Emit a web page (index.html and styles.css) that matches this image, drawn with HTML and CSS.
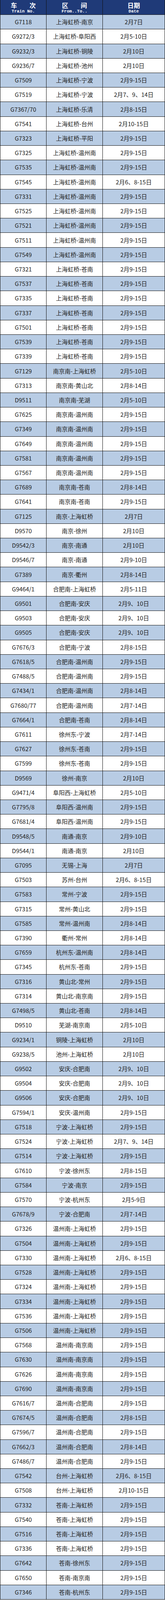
FILE: index.html
```html
<!DOCTYPE html>
<html lang="zh-CN">
<head>
<meta charset="utf-8">
<meta name="viewport" content="width=device-width, initial-scale=1">
<title>列车开行表</title>
<link rel="stylesheet" href="styles.css">
</head>
<body>
<div class="sheet">
  <div class="row head">
    <div class="c"><span class="zh">车　　次</span><span class="en">Train No.</span></div>
    <div class="c"><span class="zh">区　　间</span><span class="en">From..To..</span></div>
    <div class="c"><span class="zh">日期</span><span class="en">Date</span></div>
  </div>
  <div class="row b"><div class="c">G7118</div><div class="c">上海虹桥-南京</div><div class="c">2月7日</div></div>
  <div class="row"><div class="c">G9272/3</div><div class="c">上海虹桥-阜阳西</div><div class="c">2月5-10日</div></div>
  <div class="row b"><div class="c">G9232/3</div><div class="c">上海虹桥-铜陵</div><div class="c">2月10日</div></div>
  <div class="row"><div class="c">G9236/7</div><div class="c">上海虹桥-池州</div><div class="c">2月10日</div></div>
  <div class="row b"><div class="c">G7509</div><div class="c">上海虹桥-宁波</div><div class="c">2月9-15日</div></div>
  <div class="row"><div class="c">G7519</div><div class="c">上海虹桥-宁波</div><div class="c">2月7、9、14日</div></div>
  <div class="row b"><div class="c">G7367/70</div><div class="c">上海虹桥-乐清</div><div class="c">2月8-15日</div></div>
  <div class="row"><div class="c">G7541</div><div class="c">上海虹桥-台州</div><div class="c">2月10-15日</div></div>
  <div class="row b"><div class="c">G7323</div><div class="c">上海虹桥-平阳</div><div class="c">2月9-15日</div></div>
  <div class="row"><div class="c">G7325</div><div class="c">上海虹桥-温州南</div><div class="c">2月9-15日</div></div>
  <div class="row b"><div class="c">G7535</div><div class="c">上海虹桥-温州南</div><div class="c">2月9-15日</div></div>
  <div class="row"><div class="c">G7545</div><div class="c">上海虹桥-温州南</div><div class="c">2月6、8-15日</div></div>
  <div class="row b"><div class="c">G7331</div><div class="c">上海虹桥-温州南</div><div class="c">2月9-15日</div></div>
  <div class="row"><div class="c">G7525</div><div class="c">上海虹桥-温州南</div><div class="c">2月9-15日</div></div>
  <div class="row b"><div class="c">G7521</div><div class="c">上海虹桥-温州南</div><div class="c">2月9-15日</div></div>
  <div class="row"><div class="c">G7511</div><div class="c">上海虹桥-温州南</div><div class="c">2月9-15日</div></div>
  <div class="row b"><div class="c">G7549</div><div class="c">上海虹桥-温州南</div><div class="c">2月9-15日</div></div>
  <div class="row"><div class="c">G7321</div><div class="c">上海虹桥-苍南</div><div class="c">2月9-15日</div></div>
  <div class="row b"><div class="c">G7537</div><div class="c">上海虹桥-苍南</div><div class="c">2月9-15日</div></div>
  <div class="row"><div class="c">G7335</div><div class="c">上海虹桥-苍南</div><div class="c">2月9-15日</div></div>
  <div class="row b"><div class="c">G7337</div><div class="c">上海虹桥-苍南</div><div class="c">2月9-15日</div></div>
  <div class="row"><div class="c">G7501</div><div class="c">上海虹桥-苍南</div><div class="c">2月9-15日</div></div>
  <div class="row b"><div class="c">G7539</div><div class="c">上海虹桥-苍南</div><div class="c">2月9-15日</div></div>
  <div class="row"><div class="c">G7339</div><div class="c">上海虹桥-苍南</div><div class="c">2月9-15日</div></div>
  <div class="row b"><div class="c">G7129</div><div class="c">南京南-上海虹桥</div><div class="c">2月5-10日</div></div>
  <div class="row"><div class="c">G7313</div><div class="c">南京南-黄山北</div><div class="c">2月8-14日</div></div>
  <div class="row b"><div class="c">D9511</div><div class="c">南京南-芜湖</div><div class="c">2月5-10日</div></div>
  <div class="row"><div class="c">G7625</div><div class="c">南京南-温州南</div><div class="c">2月9-15日</div></div>
  <div class="row b"><div class="c">G7349</div><div class="c">南京南-温州南</div><div class="c">2月9-15日</div></div>
  <div class="row"><div class="c">G7649</div><div class="c">南京南-温州南</div><div class="c">2月9-15日</div></div>
  <div class="row b"><div class="c">G7581</div><div class="c">南京南-温州南</div><div class="c">2月9-15日</div></div>
  <div class="row"><div class="c">G7567</div><div class="c">南京南-温州南</div><div class="c">2月9-15日</div></div>
  <div class="row b"><div class="c">G7689</div><div class="c">南京南-苍南</div><div class="c">2月8-14日</div></div>
  <div class="row"><div class="c">G7641</div><div class="c">南京南-苍南</div><div class="c">2月9-15日</div></div>
  <div class="row b"><div class="c">G7125</div><div class="c">南京-上海虹桥</div><div class="c">2月7日</div></div>
  <div class="row"><div class="c">D9570</div><div class="c">南京-徐州</div><div class="c">2月10日</div></div>
  <div class="row b"><div class="c">D9542/3</div><div class="c">南京-南通</div><div class="c">2月10日</div></div>
  <div class="row"><div class="c">D9546/7</div><div class="c">南京-南通</div><div class="c">2月9-10日</div></div>
  <div class="row b"><div class="c">G7389</div><div class="c">南京-衢州</div><div class="c">2月8-14日</div></div>
  <div class="row"><div class="c">G9464/1</div><div class="c">合肥南-上海虹桥</div><div class="c">2月5-11日</div></div>
  <div class="row b"><div class="c">G9501</div><div class="c">合肥南-安庆</div><div class="c">2月9、10日</div></div>
  <div class="row"><div class="c">G9503</div><div class="c">合肥南-安庆</div><div class="c">2月9、10日</div></div>
  <div class="row b"><div class="c">G9505</div><div class="c">合肥南-安庆</div><div class="c">2月9、10日</div></div>
  <div class="row"><div class="c">G7676/3</div><div class="c">合肥南-宁波</div><div class="c">2月8-15日</div></div>
  <div class="row b"><div class="c">G7618/5</div><div class="c">合肥南-温州南</div><div class="c">2月9-15日</div></div>
  <div class="row"><div class="c">G7488/5</div><div class="c">合肥南-温州南</div><div class="c">2月9-15日</div></div>
  <div class="row b"><div class="c">G7434/1</div><div class="c">合肥南-温州南</div><div class="c">2月8-14日</div></div>
  <div class="row"><div class="c">G7680/77</div><div class="c">合肥南-温州南</div><div class="c">2月7-14日</div></div>
  <div class="row b"><div class="c">G7664/1</div><div class="c">合肥南-苍南</div><div class="c">2月8-14日</div></div>
  <div class="row"><div class="c">G7611</div><div class="c">徐州东-宁波</div><div class="c">2月7-14日</div></div>
  <div class="row b"><div class="c">G7627</div><div class="c">徐州东-苍南</div><div class="c">2月9-15日</div></div>
  <div class="row"><div class="c">G7599</div><div class="c">徐州东-苍南</div><div class="c">2月9-15日</div></div>
  <div class="row b"><div class="c">D9569</div><div class="c">徐州-南京</div><div class="c">2月10日</div></div>
  <div class="row"><div class="c">G9471/4</div><div class="c">阜阳西-上海虹桥</div><div class="c">2月5-10日</div></div>
  <div class="row b"><div class="c">G7795/8</div><div class="c">阜阳西-温州南</div><div class="c">2月9-15日</div></div>
  <div class="row"><div class="c">G7681/4</div><div class="c">阜阳西-温州南</div><div class="c">2月9-15日</div></div>
  <div class="row b"><div class="c">D9548/5</div><div class="c">南通-南京</div><div class="c">2月9-10日</div></div>
  <div class="row"><div class="c">D9544/1</div><div class="c">南通-南京</div><div class="c">2月10日</div></div>
  <div class="row b"><div class="c">G7095</div><div class="c">无锡-上海</div><div class="c">2月7日</div></div>
  <div class="row"><div class="c">G7503</div><div class="c">苏州-台州</div><div class="c">2月6、8-15日</div></div>
  <div class="row b"><div class="c">G7583</div><div class="c">常州-宁波</div><div class="c">2月9-15日</div></div>
  <div class="row"><div class="c">G7315</div><div class="c">常州-黄山北</div><div class="c">2月9-15日</div></div>
  <div class="row b"><div class="c">G7585</div><div class="c">常州-温州南</div><div class="c">2月8-14日</div></div>
  <div class="row"><div class="c">G7390</div><div class="c">衢州-常州</div><div class="c">2月8-14日</div></div>
  <div class="row b"><div class="c">G7659</div><div class="c">杭州东-温州南</div><div class="c">2月8-14日</div></div>
  <div class="row"><div class="c">G7345</div><div class="c">杭州东-苍南</div><div class="c">2月9-15日</div></div>
  <div class="row b"><div class="c">G7316</div><div class="c">黄山北-常州</div><div class="c">2月9-15日</div></div>
  <div class="row"><div class="c">G7314</div><div class="c">黄山北-南京南</div><div class="c">2月9-15日</div></div>
  <div class="row b"><div class="c">G7498/5</div><div class="c">黄山北-苍南</div><div class="c">2月8-14日</div></div>
  <div class="row"><div class="c">D9510</div><div class="c">芜湖-南京南</div><div class="c">2月5-10日</div></div>
  <div class="row b"><div class="c">G9234/1</div><div class="c">铜陵-上海虹桥</div><div class="c">2月10日</div></div>
  <div class="row"><div class="c">G9238/5</div><div class="c">池州-上海虹桥</div><div class="c">2月10日</div></div>
  <div class="row b"><div class="c">G9502</div><div class="c">安庆-合肥南</div><div class="c">2月9、10日</div></div>
  <div class="row"><div class="c">G9504</div><div class="c">安庆-合肥南</div><div class="c">2月9、10日</div></div>
  <div class="row b"><div class="c">G9506</div><div class="c">安庆-合肥南</div><div class="c">2月9、10日</div></div>
  <div class="row"><div class="c">G7594/1</div><div class="c">安庆-温州南</div><div class="c">2月9-15日</div></div>
  <div class="row b"><div class="c">G7518</div><div class="c">宁波-上海虹桥</div><div class="c">2月9-15日</div></div>
  <div class="row"><div class="c">G7524</div><div class="c">宁波-上海虹桥</div><div class="c">2月7、9、14日</div></div>
  <div class="row b"><div class="c">G7514</div><div class="c">宁波-上海虹桥</div><div class="c">2月9-15日</div></div>
  <div class="row"><div class="c">G7610</div><div class="c">宁波-徐州东</div><div class="c">2月8-15日</div></div>
  <div class="row b"><div class="c">G7584</div><div class="c">宁波-南京</div><div class="c">2月9-15日</div></div>
  <div class="row"><div class="c">G7570</div><div class="c">宁波-杭州东</div><div class="c">2月5-9日</div></div>
  <div class="row b"><div class="c">G7678/9</div><div class="c">宁波-合肥南</div><div class="c">2月7-14日</div></div>
  <div class="row"><div class="c">G7326</div><div class="c">温州南-上海虹桥</div><div class="c">2月9-15日</div></div>
  <div class="row b"><div class="c">G7504</div><div class="c">温州南-上海虹桥</div><div class="c">2月9-15日</div></div>
  <div class="row"><div class="c">G7330</div><div class="c">温州南-上海虹桥</div><div class="c">2月6、8-15日</div></div>
  <div class="row b"><div class="c">G7528</div><div class="c">温州南-上海虹桥</div><div class="c">2月9-15日</div></div>
  <div class="row"><div class="c">G7324</div><div class="c">温州南-上海虹桥</div><div class="c">2月9-15日</div></div>
  <div class="row b"><div class="c">G7334</div><div class="c">温州南-上海虹桥</div><div class="c">2月9-15日</div></div>
  <div class="row"><div class="c">G7536</div><div class="c">温州南-上海虹桥</div><div class="c">2月9-15日</div></div>
  <div class="row b"><div class="c">G7506</div><div class="c">温州南-上海虹桥</div><div class="c">2月9-15日</div></div>
  <div class="row"><div class="c">G7568</div><div class="c">温州南-南京南</div><div class="c">2月9-15日</div></div>
  <div class="row b"><div class="c">G7630</div><div class="c">温州南-南京南</div><div class="c">2月9-15日</div></div>
  <div class="row"><div class="c">G7626</div><div class="c">温州南-南京南</div><div class="c">2月9-15日</div></div>
  <div class="row b"><div class="c">G7690</div><div class="c">温州南-南京南</div><div class="c">2月9-15日</div></div>
  <div class="row"><div class="c">G7616/7</div><div class="c">温州南-合肥南</div><div class="c">2月9-15日</div></div>
  <div class="row b"><div class="c">G7674/5</div><div class="c">温州南-合肥南</div><div class="c">2月8-15日</div></div>
  <div class="row"><div class="c">G7596/7</div><div class="c">温州南-合肥南</div><div class="c">2月9-15日</div></div>
  <div class="row b"><div class="c">G7662/3</div><div class="c">温州南-合肥南</div><div class="c">2月8-14日</div></div>
  <div class="row"><div class="c">G7486/7</div><div class="c">温州南-合肥南</div><div class="c">2月9-15日</div></div>
  <div class="row b"><div class="c">G7542</div><div class="c">台州-上海虹桥</div><div class="c">2月6、8-15日</div></div>
  <div class="row"><div class="c">G7508</div><div class="c">台州-上海虹桥</div><div class="c">2月10-15日</div></div>
  <div class="row b"><div class="c">G7332</div><div class="c">苍南-上海虹桥</div><div class="c">2月9-15日</div></div>
  <div class="row"><div class="c">G7540</div><div class="c">苍南-上海虹桥</div><div class="c">2月9-15日</div></div>
  <div class="row b"><div class="c">G7516</div><div class="c">苍南-上海虹桥</div><div class="c">2月9-15日</div></div>
  <div class="row"><div class="c">G7336</div><div class="c">苍南-上海虹桥</div><div class="c">2月9-15日</div></div>
  <div class="row b"><div class="c">G7642</div><div class="c">苍南-徐州东</div><div class="c">2月9-15日</div></div>
  <div class="row"><div class="c">G7650</div><div class="c">苍南-南京南</div><div class="c">2月9-15日</div></div>
  <div class="row b"><div class="c">G7346</div><div class="c">苍南-杭州东</div><div class="c">2月9-15日</div></div>
</div>
</body>
</html>
```

FILE: styles.css
```css
html {
  -webkit-text-size-adjust: 100%;
  text-size-adjust: 100%;
}

html, body {
  margin: 0;
  padding: 0;
  background: #ffffff;
}

/* one unit = the reference's pixel, stretched to the real viewport height */
.sheet {
  --u: calc(100vh / 4401);
  width: 422px;
  height: 100vh;
  overflow: hidden;
  font-family: "Noto Sans CJK SC", sans-serif;
  color: #222222;
}

.row {
  display: grid;
  grid-template-columns: 119px 144px 159px;
  height: calc(var(--u) * 40);
  box-sizing: border-box;
  border-bottom: 1px solid #111111;
  background: #ffffff;
}

.row.b {
  background: #b8cce4;
}

.c {
  box-sizing: border-box;
  border-right: 1px solid #111111;
  display: flex;
  align-items: center;
  justify-content: center;
  font-size: 15px;
  line-height: 18px;
  white-space: nowrap;
  overflow: hidden;
}

.c:first-child {
  border-left: 1px solid #111111;
}

.row.head {
  height: calc(var(--u) * 41);
  background: #1f3a78;
  color: #ffffff;
}

.row.head .c {
  flex-direction: column;
  justify-content: flex-start;
  padding-top: calc(var(--u) * 4);
}

.row.head .zh {
  font-family: "Noto Sans CJK SC", sans-serif;
  font-weight: 700;
  font-size: 16px;
  line-height: calc(var(--u) * 20);
}

.row.head .en {
  font-family: "Liberation Mono", monospace;
  font-weight: 700;
  font-size: 11px;
  line-height: calc(var(--u) * 16);
}
```
